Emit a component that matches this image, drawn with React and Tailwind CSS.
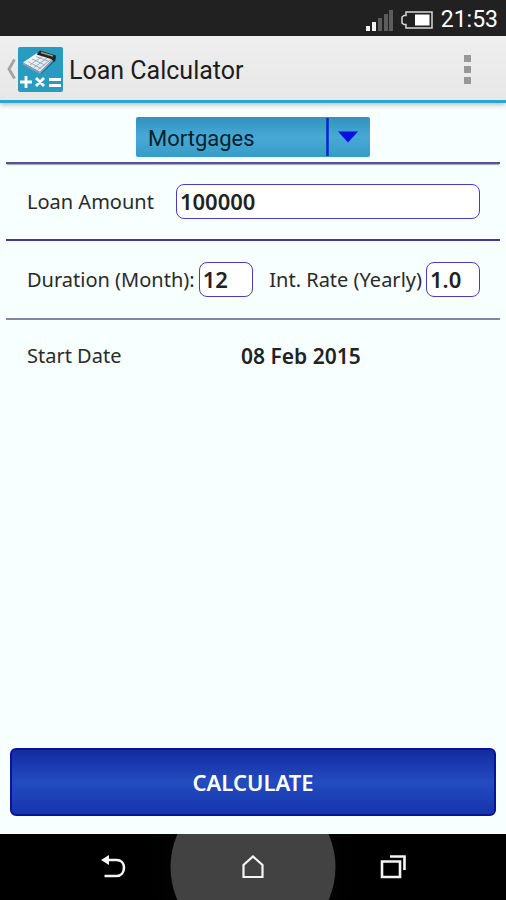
import { useState } from 'react';

const LOAN_TYPES = ['Mortgages', 'Car Loan', 'Personal Loan'];

const SignalIcon = () => (
  <svg width="28" height="22" viewBox="0 0 28 22" aria-hidden="true">
    <rect x="1" y="17" width="4" height="5" fill="#f4f4f4" />
    <rect x="7" y="13" width="4" height="9" fill="#f4f4f4" />
    <rect x="13" y="9" width="4" height="13" fill="#5c5c5c" />
    <rect x="19" y="5" width="4" height="17" fill="#5c5c5c" />
    <rect x="24" y="1" width="4" height="21" fill="#5c5c5c" />
  </svg>
);

const BatteryIcon = () => (
  <svg width="32" height="18" viewBox="0 0 32 18" aria-hidden="true">
    <path d="M5 1H31V17H5V13.500H3L1 12V6L3 4.500H5Z" fill="none" stroke="#d8d8d8" strokeWidth="1.500" />
    <rect x="14" y="3.500" width="14.500" height="11" fill="#ffffff" />
  </svg>
);

const CalculatorLogo = () => (
  <svg width="45" height="45" viewBox="0 0 45 45" aria-hidden="true">
    <defs>
      <linearGradient id="keys" x1="0" y1="0" x2="1" y2="1">
        <stop offset="0" stopColor="#ffffff" />
        <stop offset="1" stopColor="#cfdbe8" />
      </linearGradient>
    </defs>
    <rect width="45" height="45" rx="2" fill="#289bc1" />
    <path d="M7 17L23 27L38 13V9L22 23Z" fill="#12627f" />
    <path d="M5 15.500L19 6L37 10L22 25Z" fill="url(#keys)" />
    <path d="M5 15.500L22 25L37 10V12L22 27L5 17.500Z" fill="#8ba3b5" />
    <path d="M18.500 7.500L22 3.500L38 8.500L36.500 15L33 12Z" fill="#252525" />
    <path d="M23 5.500L35 9" stroke="#a89579" strokeWidth="1.500" />
    <path d="M10 14.500L23 21.500M14 12L27 18M18 9.500L31 14.500M12 18L24 9.500M16 20.500L29 11M20 22.500L33 12.500" stroke="#94a5bb" strokeWidth="0.900" fill="none" />
    <path d="M2 35H14M8 29V41M18 31L26 39M26 31L18 39M31 32.500H43M31 38.500H43" stroke="#ffffff" strokeWidth="2.800" fill="none" />
  </svg>
);

const StatusBar = () => (
  <div className="flex h-9 shrink-0 items-center justify-end bg-[#212121] pt-1 pr-2 text-white">
    <SignalIcon />
    <div className="mr-2 ml-2">
      <BatteryIcon />
    </div>
    <span className="text-[23px] leading-9">21:53</span>
  </div>
);

const ActionBar = () => (
  <header className="flex h-[67px] shrink-0 items-center border-b-3 border-[#2fa4d3] bg-gradient-to-b from-[#efefef] to-[#e7e7e7] pt-0.5 shadow-[0_2px_5px_rgba(0,0,0,0.25)]">
    <button type="button" aria-label="Navigate up" className="flex items-center pl-1.5">
      <svg width="12" height="22" viewBox="0 0 12 22" aria-hidden="true">
        <path d="M8.500 1.500L3 11L8.500 20.500" fill="none" stroke="#a3a3a3" strokeWidth="2.800" />
      </svg>
      <CalculatorLogo />
    </button>
    <h1 className="ml-1.5 flex-1 pt-1 text-[25px] leading-8 text-[#1c1c1c]">Loan Calculator</h1>
    <button type="button" aria-label="More options" className="mr-[35px] flex flex-col gap-1">
      <span className="size-[7px] bg-[#979797]" />
      <span className="size-[7px] bg-[#979797]" />
      <span className="size-[7px] bg-[#979797]" />
    </button>
  </header>
);

const inputClass =
  'h-[35px] min-w-0 rounded-lg border border-[#4a3bd0] bg-white px-[3px] pb-0.5 text-[22px] font-semibold text-[#222222] outline-none';

const LoanForm = () => {
  const [type, setType] = useState(LOAN_TYPES[0]);
  const [amount, setAmount] = useState('100000');
  const [months, setMonths] = useState('12');
  const [rate, setRate] = useState('1.0');

  return (
    <form
      onSubmit={(e) => e.preventDefault()}
      className="flex flex-1 flex-col font-['Noto_Sans',sans-serif] text-[20px] leading-7 text-[#2a2a2a]"
    >
      <div className="mx-1.5 flex justify-center border-b-2 border-[#54509a] pt-3.5 pb-[5px] shadow-[0_2px_1px_-1px_rgba(0,0,0,0.3)]">
        <div className="relative flex w-[234px]">
          <select
            aria-label="Loan type"
            value={type}
            onChange={(e) => setType(e.target.value)}
            className="h-10 w-full appearance-none rounded-xs bg-gradient-to-b from-[#2d93bd] via-[#48a9d6] to-[#359cc8] px-3 pt-1 font-['Roboto',sans-serif] text-[22px] leading-9 text-[#07222c]"
          >
            {LOAN_TYPES.map((t) => (
              <option key={t}>{t}</option>
            ))}
          </select>
          <svg width="44" height="40" viewBox="0 0 44 40" aria-hidden="true" className="pointer-events-none absolute top-0 right-0">
            <path d="M1.500 1V39" stroke="#0d20d0" strokeWidth="2.500" />
            <path d="M12 14.500H32L22 25.500Z" fill="#0a10df" />
          </svg>
        </div>
      </div>

      <div className="mx-1.5 flex items-center border-b-2 border-[#43369b] px-5 py-5">
        <label htmlFor="amount" className="mr-[22px] ml-px shrink-0">Loan Amount</label>
        <input id="amount" inputMode="numeric" value={amount} onChange={(e) => setAmount(e.target.value)} className={`${inputClass} flex-1`} />
      </div>

      <div className="mx-1.5 flex items-center justify-between border-b-2 border-[#8580ad] px-5 py-[21px]">
        <div className="ml-px flex items-center gap-1">
          <label htmlFor="months" className="whitespace-nowrap">Duration (Month):</label>
          <input id="months" inputMode="numeric" value={months} onChange={(e) => setMonths(e.target.value)} className={`${inputClass} w-[54px]`} />
        </div>
        <div className="flex items-center gap-1">
          <label htmlFor="rate" className="whitespace-nowrap">Int. Rate (Yearly)</label>
          <input id="rate" inputMode="decimal" value={rate} onChange={(e) => setRate(e.target.value)} className={`${inputClass} w-[54px]`} />
        </div>
      </div>

      <div className="flex items-center px-[27px] pt-[22px]">
        <span className="w-[214px]">Start Date</span>
        <button type="button" className="text-[21px] font-semibold text-[#222222]">08 Feb 2015</button>
      </div>

      <div className="mt-auto px-2.5 pt-6 pb-[18px]">
        <button
          type="submit"
          className="h-[68px] w-full rounded-md border-2 border-[#07159a] bg-gradient-to-b from-[#132ba0] via-[#244bc0] to-[#1535ad] text-[22px] font-semibold text-white"
        >
          CALCULATE
        </button>
      </div>
    </form>
  );
};

const NavBar = () => (
  <nav className="relative flex h-[66px] shrink-0 items-center justify-center overflow-hidden bg-black">
    <div className="absolute inset-y-0 left-1/2 w-[230px] -translate-x-1/2 bg-gradient-to-r from-black via-[#303030] to-black" />
    <div className="absolute top-1/2 left-1/2 size-[165px] -translate-x-1/2 -translate-y-1/2 rounded-full bg-[#424242]" />
    <div className="relative flex w-[310px] items-center justify-between">
      <button type="button" aria-label="Back" className="flex w-[30px] justify-center">
        <svg width="26" height="26" viewBox="0 0 26 26" fill="none" aria-hidden="true">
          <path d="M8 6H16.500C21 6 24 9 24 13.500C24 18.500 21 22 16.500 22H4.500" stroke="#f5f5f5" strokeWidth="2.600" />
          <path d="M1 6L9 1V11Z" fill="#f5f5f5" />
        </svg>
      </button>
      <button type="button" aria-label="Home" className="flex w-[30px] justify-center">
        <svg width="26" height="26" viewBox="0 0 26 26" fill="none" aria-hidden="true">
          <path d="M3.500 23V11L13 2.500L22.500 11V23Z" stroke="#f5f5f5" strokeWidth="2.200" />
        </svg>
      </button>
      <button type="button" aria-label="Recent apps" className="flex w-[30px] justify-center">
        <svg width="26" height="26" viewBox="0 0 26 26" fill="none" aria-hidden="true">
          <path d="M2 7.500H20V23H2Z" stroke="#f5f5f5" strokeWidth="2.600" />
          <path d="M10 2.500H24.500V16" stroke="#f5f5f5" strokeWidth="2.600" />
        </svg>
      </button>
    </div>
  </nav>
);

export default function App() {
  return (
    <div className="flex min-h-screen flex-col bg-[#f8ffff] font-['Roboto',sans-serif]">
      <StatusBar />
      <ActionBar />
      <LoanForm />
      <NavBar />
    </div>
  );
}
